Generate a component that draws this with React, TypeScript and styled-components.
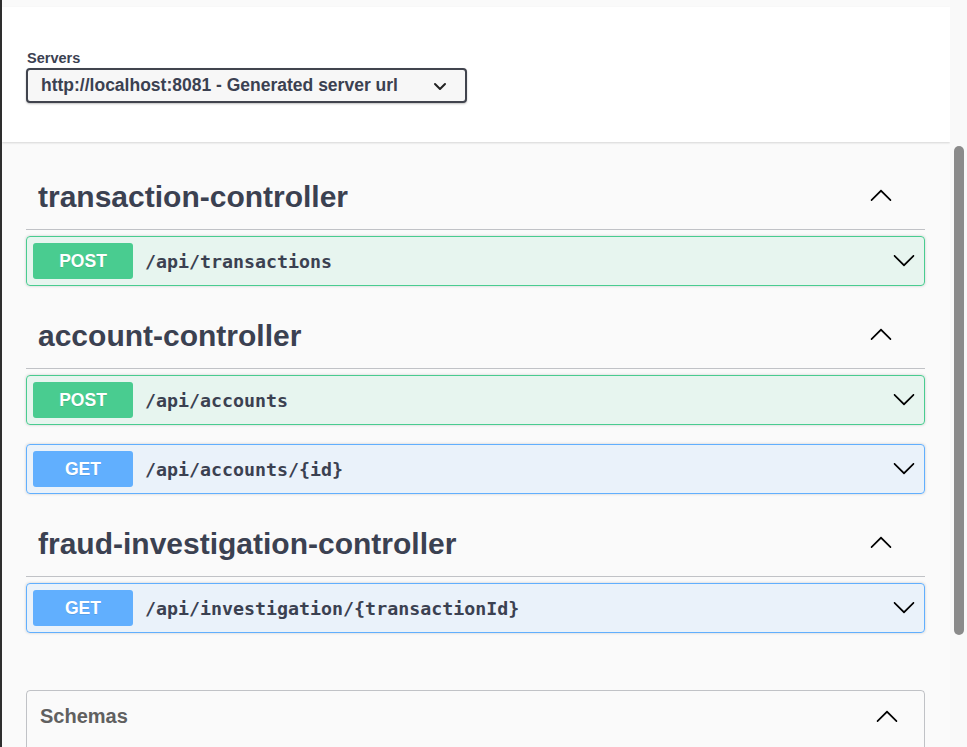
import styled, { createGlobalStyle, css } from 'styled-components';

type Method = 'post' | 'get';

const methodColors: Record<Method, { main: string; bg: string }> = {
  post: { main: '#49cc90', bg: 'rgba(73, 204, 144, 0.1)' },
  get: { main: '#61affe', bg: 'rgba(97, 175, 254, 0.1)' },
};

const tags: { name: string; ops: { method: Method; path: string }[] }[] = [
  { name: 'transaction-controller', ops: [{ method: 'post', path: '/api/transactions' }] },
  {
    name: 'account-controller',
    ops: [
      { method: 'post', path: '/api/accounts' },
      { method: 'get', path: '/api/accounts/{id}' },
    ],
  },
  {
    name: 'fraud-investigation-controller',
    ops: [{ method: 'get', path: '/api/investigation/{transactionId}' }],
  },
];

const GlobalStyle = createGlobalStyle`
  html, body {
    margin: 0;
    height: 100%;
    overflow: hidden;
    background: #fafafa;
    font-family: "Liberation Sans", Arial, sans-serif;
    color: #3b4151;
  }
`;

const Frame = styled.div`
  display: flex;
  height: 747px;
  border-left: 2px solid #2e2e2e;
  box-sizing: border-box;
`;

const Page = styled.div`
  flex: 1;
  display: flex;
  flex-direction: column;
  overflow: hidden;
  background: #fafafa;
`;

const TopStrip = styled.div`
  height: 7px;
  flex-shrink: 0;
`;

const SchemeContainer = styled.div`
  flex-shrink: 0;
  background: #fff;
  box-shadow: 0 1px 2px 0 rgba(0, 0, 0, 0.15);
  padding: 42px 24px 39px;
  position: relative;
  z-index: 1;
`;

const ServersLabel = styled.div`
  font-size: 14.5px;
  font-weight: 700;
  line-height: 18px;
  padding-left: 1px;
  margin-bottom: 1px;
`;

const ServerSelect = styled.div`
  width: 441px;
  height: 35px;
  box-sizing: border-box;
  border: 2px solid #41444e;
  border-radius: 4px;
  background: #f7f7f7;
  box-shadow: 0 1px 2px 0 rgba(0, 0, 0, 0.25);
  display: flex;
  align-items: center;
  justify-content: space-between;
  padding: 0 18px 0 13px;
  font-size: 17.5px;
  font-weight: 700;
  color: #3b4151;
`;

const Main = styled.div`
  padding: 25px 25px 0 24px;
`;

const TagSection = styled.section`
  display: flow-root;
`;

const TagHeader = styled.div`
  display: flex;
  align-items: center;
  justify-content: space-between;
  padding: 15px 32px 17px 12px;
  border-bottom: 1px solid rgba(59, 65, 81, 0.3);
  margin-bottom: 6px;
`;

const TagTitle = styled.h3`
  margin: 0;
  font-size: 30px;
  line-height: 30px;
  font-weight: 700;
  color: #3b4151;
`;

const ArrowBox = styled.span<{ $up?: boolean; $shift?: number }>`
  display: flex;
  width: 24px;
  height: 24px;
  margin-top: ${(p) => p.$shift ?? -3}px;
  ${(p) =>
    p.$up &&
    css`
      transform: rotate(180deg);
    `}
`;

const OpBlock = styled.div<{ $method: Method }>`
  display: flex;
  align-items: center;
  height: 50px;
  box-sizing: border-box;
  padding: 0 8px 0 6px;
  margin-bottom: 19px;
  border: 1px solid ${(p) => methodColors[p.$method].main};
  background: ${(p) => methodColors[p.$method].bg};
  border-radius: 4px;
  box-shadow: 0 0 3px rgba(0, 0, 0, 0.19);

  &:last-child {
    margin-bottom: 20px;
  }
`;

const MethodBadge = styled.span<{ $method: Method }>`
  width: 100px;
  height: 36px;
  flex-shrink: 0;
  display: flex;
  align-items: center;
  justify-content: center;
  background: ${(p) => methodColors[p.$method].main};
  border-radius: 3px;
  color: #fff;
  font-size: 17.5px;
  font-weight: 700;
  text-shadow: 0 1px 0 rgba(0, 0, 0, 0.1);
`;

const OpPath = styled.span`
  flex: 1;
  margin-left: 12px;
  font-family: "DejaVu Sans Mono", "Liberation Mono", monospace;
  font-size: 18.3px;
  font-weight: 700;
  color: #3b4151;
`;

const Models = styled.section`
  margin-top: 37px;
  border: 1px solid rgba(59, 65, 81, 0.3);
  border-radius: 4px;
  height: 120px;
`;

const ModelsHeader = styled.div`
  display: flex;
  align-items: center;
  justify-content: space-between;
  height: 50px;
  padding: 0 25px 0 13px;
`;

const ModelsTitle = styled.h4`
  margin: 0;
  font-size: 20px;
  font-weight: 700;
  color: #606060;
`;

const ScrollTrack = styled.div`
  width: 17px;
  flex-shrink: 0;
  background: #f9f9f9;
  padding-top: 146px;
  box-sizing: border-box;
`;

const ScrollThumb = styled.div`
  width: 10px;
  height: 489px;
  margin-left: 4px;
  border-radius: 5px;
  background: #8b8b8b;
`;

const Arrow = ({ up, shift }: { up?: boolean; shift?: number }) => (
  <ArrowBox $up={up} $shift={shift}>
    <svg width="24" height="24" viewBox="0 0 20 20" fill="#000">
      <path d="M17.418 6.109c.272-.268.709-.268.979 0s.271.701 0 .969l-7.908 7.83c-.27.268-.707.268-.979 0l-7.908-7.83c-.27-.268-.27-.701 0-.969.271-.268.709-.268.979 0L10 13.25l7.418-7.141z" />
    </svg>
  </ArrowBox>
);

const SelectChevron = () => (
  <svg width="14" height="14" viewBox="0 0 14 14" fill="none">
    <polyline points="2,5 7,10 12,5" stroke="#222" strokeWidth="2" strokeLinecap="round" strokeLinejoin="round" />
  </svg>
);

export default function App() {
  return (
    <>
      <GlobalStyle />
      <Frame>
        <Page>
          <TopStrip />
          <SchemeContainer>
            <ServersLabel>Servers</ServersLabel>
            <ServerSelect>
              <span>http://localhost:8081 - Generated server url</span>
              <SelectChevron />
            </ServerSelect>
          </SchemeContainer>
          <Main>
            {tags.map((tag) => (
              <TagSection key={tag.name}>
                <TagHeader>
                  <TagTitle>{tag.name}</TagTitle>
                  <Arrow up />
                </TagHeader>
                {tag.ops.map((op) => (
                  <OpBlock key={op.method + op.path} $method={op.method}>
                    <MethodBadge $method={op.method}>{op.method.toUpperCase()}</MethodBadge>
                    <OpPath>{op.path}</OpPath>
                    <Arrow />
                  </OpBlock>
                ))}
              </TagSection>
            ))}
            <Models>
              <ModelsHeader>
                <ModelsTitle>Schemas</ModelsTitle>
                <Arrow up shift={2} />
              </ModelsHeader>
            </Models>
          </Main>
        </Page>
        <ScrollTrack>
          <ScrollThumb />
        </ScrollTrack>
      </Frame>
    </>
  );
}
